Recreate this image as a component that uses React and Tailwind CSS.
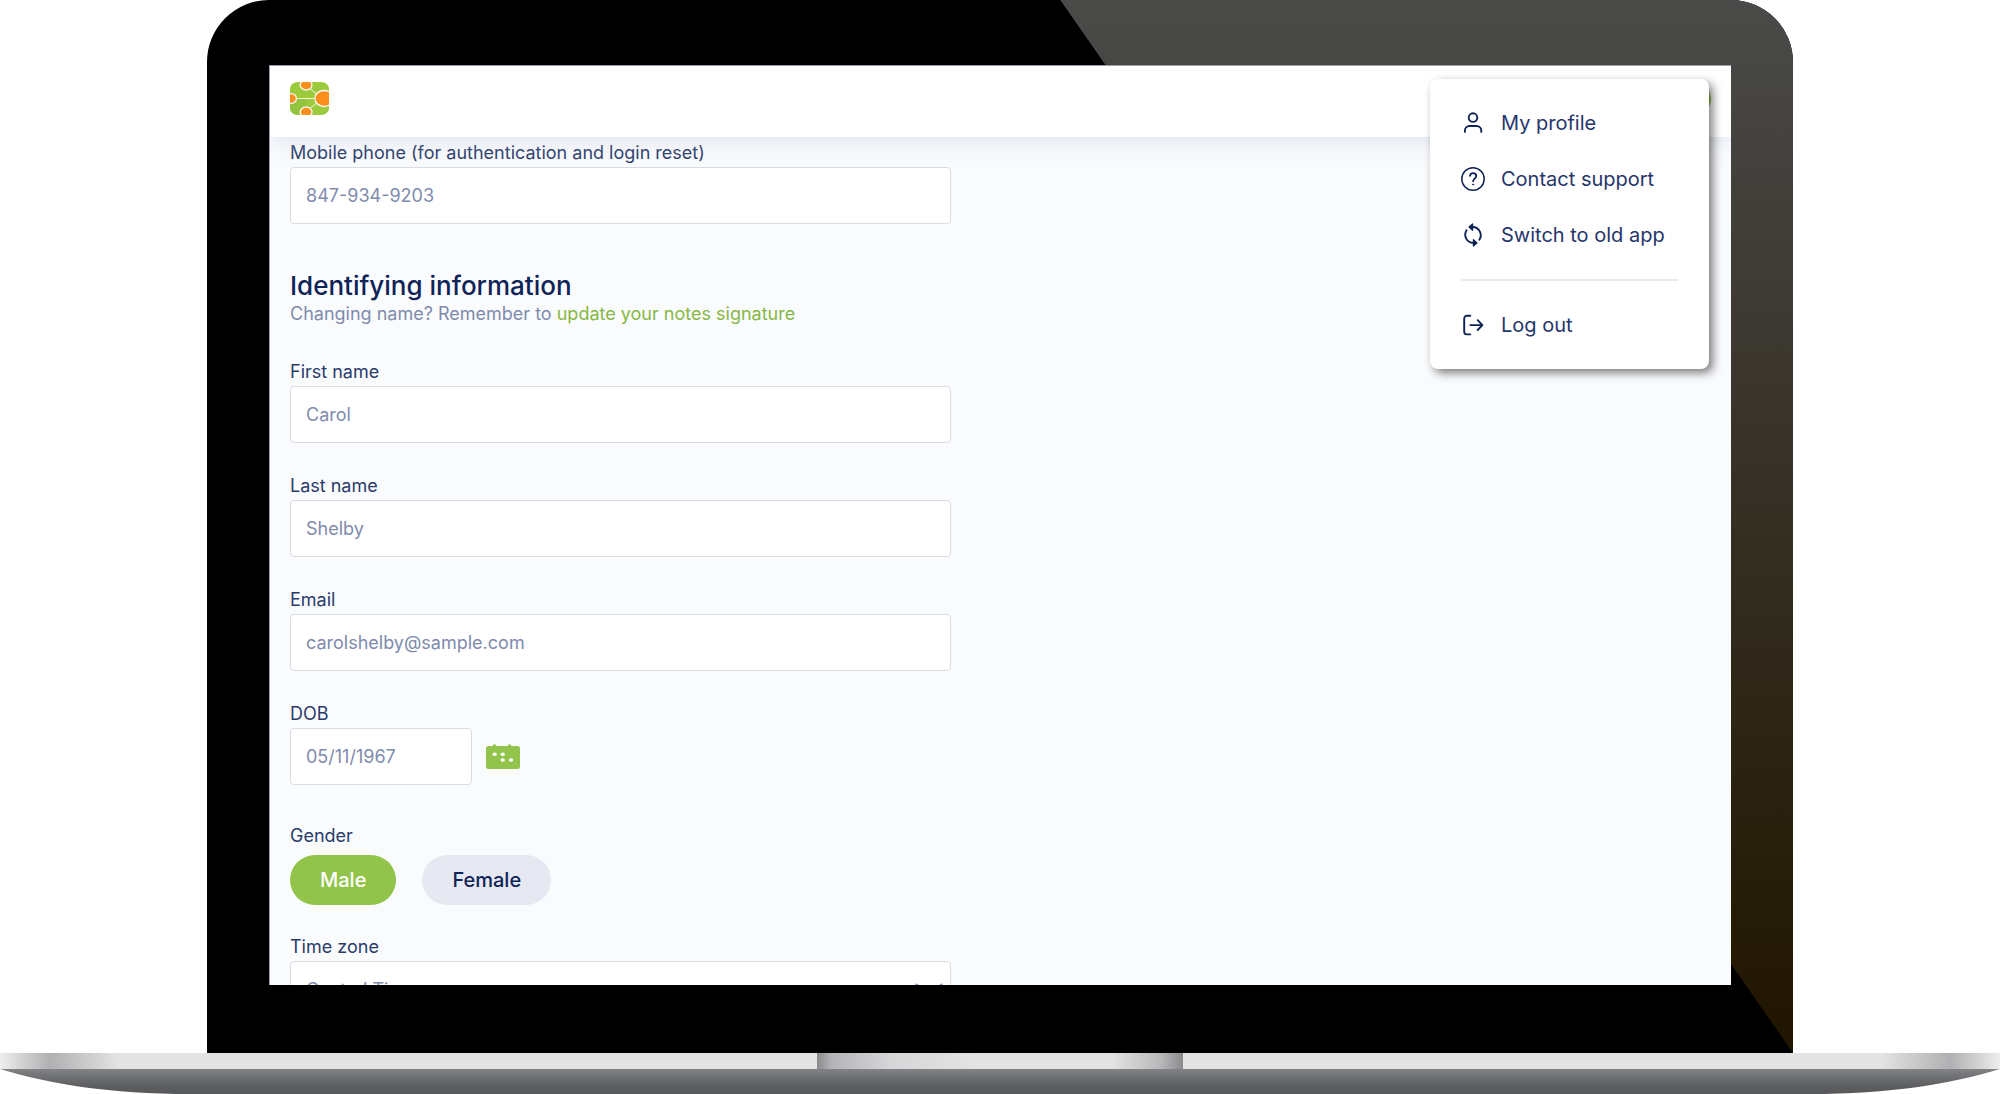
import React, { useState } from 'react';

const Logo = () => (
  <svg viewBox="0 0 40 34" className="h-[33px] w-[39px]" preserveAspectRatio="none" aria-hidden="true">
    <defs>
      <clipPath id="logo-tile">
        <rect width="40" height="34" rx="8" ry="7" />
      </clipPath>
    </defs>
    <g clipPath="url(#logo-tile)">
      <rect width="40" height="34" fill="#9bcb3c" />
      <path d="M0 34V18L16 17L20 34Z" fill="#8ec03f" opacity="0.6" />
      <path d="M4 17H30M17 4L32 16M17 30L32 18" stroke="#f4f8e4" strokeWidth="1" fill="none" />
      <g fill="#f98e1d" stroke="#fdf6ea" strokeWidth="1.4">
        <ellipse cx="16.5" cy="3" rx="6" ry="5.2" />
        <ellipse cx="16.5" cy="31" rx="6" ry="5.2" />
        <ellipse cx="1" cy="17" rx="5.6" ry="5" />
        <ellipse cx="35" cy="17" rx="9.5" ry="8.2" />
      </g>
    </g>
  </svg>
);

const CalendarIcon = () => (
  <svg viewBox="0 0 34 26" className="h-[26px] w-[34px]" aria-hidden="true">
    <rect y="2" width="34" height="23" rx="2.5" fill="#92c44c" />
    <ellipse cx="8.5" cy="1.8" rx="1.8" ry="1.5" fill="#92c44c" />
    <ellipse cx="23.5" cy="1.8" rx="1.8" ry="1.5" fill="#92c44c" />
    <g fill="#fff">
      <ellipse cx="8.7" cy="10.3" rx="2.2" ry="1.8" />
      <ellipse cx="16.7" cy="10.3" rx="2.2" ry="1.8" />
      <ellipse cx="16.7" cy="16" rx="2.2" ry="1.8" />
      <ellipse cx="25" cy="16" rx="2.2" ry="1.8" />
    </g>
  </svg>
);

const iconProps = {
  viewBox: '0 0 24 24',
  className: 'h-6 w-6 shrink-0',
  fill: 'none',
  stroke: '#0f2357',
  strokeWidth: 1.9,
  strokeLinecap: 'round',
  strokeLinejoin: 'round',
  'aria-hidden': true,
};

const UserIcon = () => (
  <svg {...iconProps}>
    <circle cx="12" cy="6.6" r="4.3" />
    <path d="M3.9 20.9V19.6A4.6 4.6 0 0 1 8.5 15H15.7A4.6 4.6 0 0 1 20.3 19.6V20.9" />
  </svg>
);

const HelpIcon = () => (
  <svg {...iconProps} strokeWidth={1.5}>
    <circle cx="12" cy="12" r="11.2" />
    <path strokeWidth="1.8" d="M9 8.8C9.3 7 10.6 6.2 12.1 6.2C14 6.2 15.2 7.4 15.2 9C15.2 11.6 12.1 11.7 12.1 14.3" />
    <circle cx="12.1" cy="17.5" r="0.6" fill="#0f2357" strokeWidth="0.8" />
  </svg>
);

const SwitchIcon = () => (
  <svg {...iconProps}>
    <path d="M5.6 7.3A8.2 8.2 0 0 0 12.4 20" />
    <path d="M18.4 16.7A8.2 8.2 0 0 0 11.6 4" />
    <path d="M8 4L11.6 0.9V7.3Z" fill="#0f2357" strokeWidth="1.2" />
    <path d="M16 20L12.4 16.7V23.1Z" fill="#0f2357" strokeWidth="1.2" />
  </svg>
);

const LogoutIcon = () => (
  <svg {...iconProps}>
    <path d="M9.3 2.8H5.8A2.6 2.6 0 0 0 3.2 5.4V18.8A2.6 2.6 0 0 0 5.8 21.4H9.3" />
    <path d="M9.3 12.1H21M16.7 7.2L21.4 12.1L16.7 17" />
  </svg>
);

const menuItems = [
  { label: 'My profile', Icon: UserIcon },
  { label: 'Contact support', Icon: HelpIcon },
  { label: 'Switch to old app', Icon: SwitchIcon },
];

const Label = ({ children, ...props }) => (
  <label className="mb-1 block text-lg leading-5 text-[#2b3b6b]" {...props}>{children}</label>
);

const Field = ({ id, label, type = 'text', value, onChange }) => (
  <div>
    <Label htmlFor={id}>{label}</Label>
    <input
      id={id}
      name={id}
      type={type}
      value={value}
      onChange={onChange}
      className="h-[57px] w-full rounded-sm border border-[#d9dce2] bg-white px-[15px] text-lg text-[#7f8bad] outline-none"
    />
  </div>
);

const MenuLink = ({ label, Icon }) => (
  <a href="#" className="flex items-center gap-4 text-xl leading-6 text-[#26366a]">
    <Icon />
    {label}
  </a>
);

const UserMenu = () => (
  <nav className="absolute top-[13px] right-[22px] z-20 w-[279px] rounded-lg bg-white px-[31px] py-8 shadow-[4px_4px_10px_rgba(0,0,0,0.5)]">
    <div className="flex flex-col gap-8">
      {menuItems.map((item) => <MenuLink key={item.label} {...item} />)}
    </div>
    <hr className="my-8 border-t-2 border-[#e6eaf2]" />
    <MenuLink label="Log out" Icon={LogoutIcon} />
  </nav>
);

const ProfileForm = () => {
  const [form, setForm] = useState({
    phone: '847-934-9203',
    firstName: 'Carol',
    lastName: 'Shelby',
    email: 'carolshelby@sample.com',
    dob: '05/11/1967',
  });
  const [gender, setGender] = useState('Male');

  const bind = (id) => ({
    id,
    value: form[id],
    onChange: (e) => setForm({ ...form, [id]: e.target.value }),
  });

  return (
    <form className="w-[48%] px-5 pt-1.5">
      <Field {...bind('phone')} type="tel" label="Mobile phone (for authentication and login reset)" />

      <h2 className="mt-[46px] text-[26px] leading-8 font-medium text-[#0f2357]">Identifying information</h2>
      <p className="text-lg leading-6 whitespace-nowrap text-[#7f8bad]">
        Changing name? Remember to <a href="#" className="text-[#87b843]">update your notes signature</a>
      </p>

      <div className="mt-9 flex flex-col gap-[33px]">
        <Field {...bind('firstName')} label="First name" />
        <Field {...bind('lastName')} label="Last name" />
        <Field {...bind('email')} type="email" label="Email" />
        <div className="flex items-end gap-3.5">
          <div className="w-[182px]">
            <Field {...bind('dob')} label="DOB" />
          </div>
          <button type="button" aria-label="Pick a date" className="flex h-[57px] items-center">
            <CalendarIcon />
          </button>
        </div>
      </div>

      <div role="group" aria-labelledby="gender-label" className="mt-[41px]">
        <p id="gender-label" className="text-lg leading-5 text-[#2b3b6b]">Gender</p>
        <div className="mt-[9px] flex gap-[26px]">
          {['Male', 'Female'].map((option) => (
            <button
              key={option}
              type="button"
              aria-pressed={gender === option}
              onClick={() => setGender(option)}
              className={`h-[50px] rounded-full px-[30px] text-xl font-medium ${
                gender === option ? 'bg-[#92c44c] text-white' : 'bg-[#e6e9f1] text-[#0f2357]'
              }`}
            >
              {option}
            </button>
          ))}
        </div>
      </div>

      <div className="mt-8">
        <Label htmlFor="timezone">Time zone</Label>
        <div className="relative">
          <select
            id="timezone"
            className="h-[57px] w-full appearance-none rounded-sm border border-[#d9dce2] bg-white px-[15px] text-lg text-[#7f8bad] outline-none"
          >
            <option>Central Time</option>
          </select>
          <svg viewBox="0 0 28 14" className="pointer-events-none absolute top-[22px] right-2 h-3.5 w-7" fill="none" stroke="#7f8bad" strokeWidth="2" strokeLinecap="round" aria-hidden="true">
            <path d="M1.5 1.5L14 12L26.5 1.5" />
          </svg>
        </div>
      </div>
    </form>
  );
};

const Base = () => (
  <div>
    <div className="h-4 bg-[linear-gradient(90deg,#eeeeee_0%,#b0b0b2_2.5%,#e4e4e4_6%,#e4e4e4_94%,#b0b0b2_97.5%,#eeeeee_100%)]">
      <div className="mx-auto h-full w-[18.3%] bg-[linear-gradient(90deg,#8a8a8d_0%,#b4b4b6_4%,#d6d6d8_20%,#e4e4e4_45%,#e4e4e4_80%,#b8b8ba_94%,#8a8a8d_100%)]" />
    </div>
    <svg viewBox="0 0 2000 25" preserveAspectRatio="none" className="block h-[25px] w-full" aria-hidden="true">
      <defs>
        <linearGradient id="base-shade" x1="0" y1="0" x2="0" y2="1">
          <stop offset="0" stopColor="#828386" />
          <stop offset="0.7" stopColor="#5b5c5e" />
          <stop offset="1" stopColor="#58595b" />
        </linearGradient>
      </defs>
      <path d="M0 0C50 15 110 25 190 25H1810C1890 25 1950 15 2000 0Z" fill="url(#base-shade)" />
    </svg>
  </div>
);

export default function App() {
  return (
    <div className="w-full overflow-hidden bg-white font-[Inter,sans-serif]">
      <div className="relative mx-auto w-[79.3%] overflow-hidden rounded-t-[62px] bg-black px-[3.1%] pt-[3.25%] pb-[3.4%]">
        {/* Light falling across the right side of the bezel */}
        <div className="absolute inset-0 bg-linear-to-b from-[#4a4a49] to-[#201500] [clip-path:polygon(53.8%_0,100%_0,100%_100%)]" />

        <div className="relative aspect-[1462/920] overflow-hidden border-t border-l border-gray-400 bg-[#fafbfd]">
          <header className="relative z-10 flex h-[71px] items-center justify-between bg-white px-5 pb-1.5 shadow-[0_2px_24px_rgba(190,202,224,0.55)]">
            <Logo />
            <span className="h-[30px] w-10 rounded-full bg-[#92c44c]" />
          </header>
          <UserMenu />
          <ProfileForm />
        </div>
      </div>
      <Base />
    </div>
  );
}
